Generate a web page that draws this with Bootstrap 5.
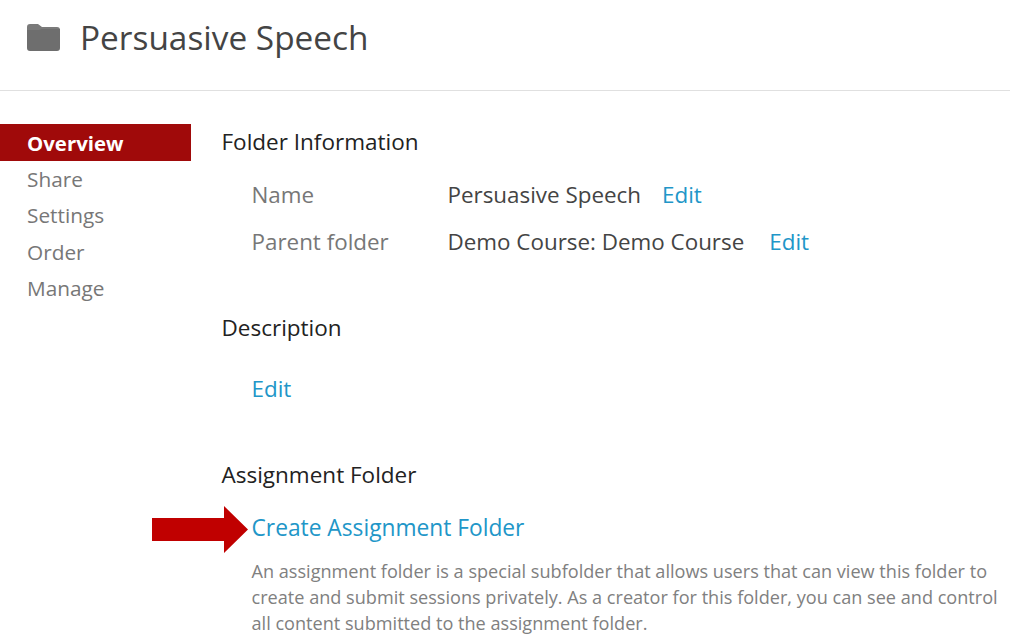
<!DOCTYPE html>
<html lang="en">
<head>
    <meta charset="UTF-8">
    <title>Persuasive Speech</title>
    <link href="https://cdn.jsdelivr.net/npm/bootstrap@5.3.0/dist/css/bootstrap.min.css" rel="stylesheet">
    <style>
        body {
            font-family: "Open Sans", "Noto Sans", sans-serif;
            overflow: hidden;
            background: #fff;
        }

        .page-head {
            height: 91px;
            border-bottom: 1px solid #e0e0e0;
            padding: 17px 0 0 27px;
            gap: 20px;
        }

        .page-head svg {
            margin-top: 7px;
        }

        .page-head h1 {
            font-size: 33.4px;
            font-weight: 400;
            color: #444;
            margin: 0;
        }

        .side-nav {
            width: 191px;
            padding-top: 33px;
            flex-shrink: 0;
        }

        .side-nav a {
            display: block;
            height: 36.6px;
            line-height: 36.6px;
            padding-left: 27px;
            font-size: 20.8px;
            color: #777;
            text-decoration: none;
        }

        .side-nav a.current {
            background: #a00a0a;
            color: #fff;
            font-size: 20.4px;
            line-height: 38px;
            font-weight: 700;
        }

        .main-col {
            padding: 37px 0 0 30.5px;
        }

        .main-col h2 {
            font-size: 22.5px;
            font-weight: 400;
            color: #222;
            margin: 0;
        }

        .main-col h2.section-gap {
            margin-top: 49px;
        }

        .indent-block {
            padding-left: 30px;
        }

        .info-row {
            font-size: 22.4px;
            line-height: 47px;
            color: #444;
        }

        .info-label {
            width: 196px;
            color: #777;
        }

        .blue-link {
            color: #2196c8;
            text-decoration: none;
            font-size: 22.4px;
            line-height: 47px;
        }

        .edit-near {
            margin-left: 21px;
        }

        .edit-far {
            margin-left: 25px;
        }

        .create-link {
            font-size: 22.75px;
        }

        .hint-text {
            font-size: 18.13px;
            line-height: 26px;
            color: #808080;
            width: 756px;
            margin-top: 7px;
        }

        .red-arrow {
            left: 152px;
            top: 506px;
        }
    </style>
</head>
<body>
    <div class="page-head d-flex align-items-start">
        <svg width="33" height="27" viewBox="0 0 33 27"><path fill="#7a7a7a" d="M0 3a3 3 0 0 1 3-3h8l4 3h15a3 3 0 0 1 3 3v3H0z"/><path fill="#6e6e6e" d="M0 6h12l3-1h18v19a3 3 0 0 1-3 3H3a3 3 0 0 1-3-3z"/></svg>
        <h1>Persuasive Speech</h1>
    </div>
    <div class="d-flex">
        <nav class="side-nav">
            <a class="current" href="#">Overview</a>
            <a href="#">Share</a>
            <a href="#">Settings</a>
            <a href="#">Order</a>
            <a href="#">Manage</a>
        </nav>
        <div class="main-col">
            <h2>Folder Information</h2>
            <div class="indent-block mt-3">
                <div class="info-row d-flex"><span class="info-label">Name</span><span>Persuasive Speech</span><a class="blue-link edit-near" href="#">Edit</a></div>
                <div class="info-row d-flex"><span class="info-label">Parent folder</span><span>Demo Course: Demo Course</span><a class="blue-link edit-far" href="#">Edit</a></div>
            </div>
            <h2 class="section-gap">Description</h2>
            <div class="indent-block mt-4"><a class="blue-link d-block" href="#">Edit</a></div>
            <h2 class="section-gap">Assignment Folder</h2>
            <div class="indent-block mt-3"><a class="blue-link create-link d-block" href="#">Create Assignment Folder</a>
                <p class="hint-text">An assignment folder is a special subfolder that allows users that can view this folder to create and submit sessions privately. As a creator for this folder, you can see and control all content submitted to the assignment folder.</p>
            </div>
        </div>
    </div>
    <svg class="red-arrow position-absolute" width="96" height="47" viewBox="0 0 96 47"><path fill="#c00000" d="M0 12h72V0l24 23.5L72 47V35H0z"/></svg>
    <script src="https://cdn.jsdelivr.net/npm/bootstrap@5.3.0/dist/js/bootstrap.bundle.min.js"></script>
</body>
</html>
